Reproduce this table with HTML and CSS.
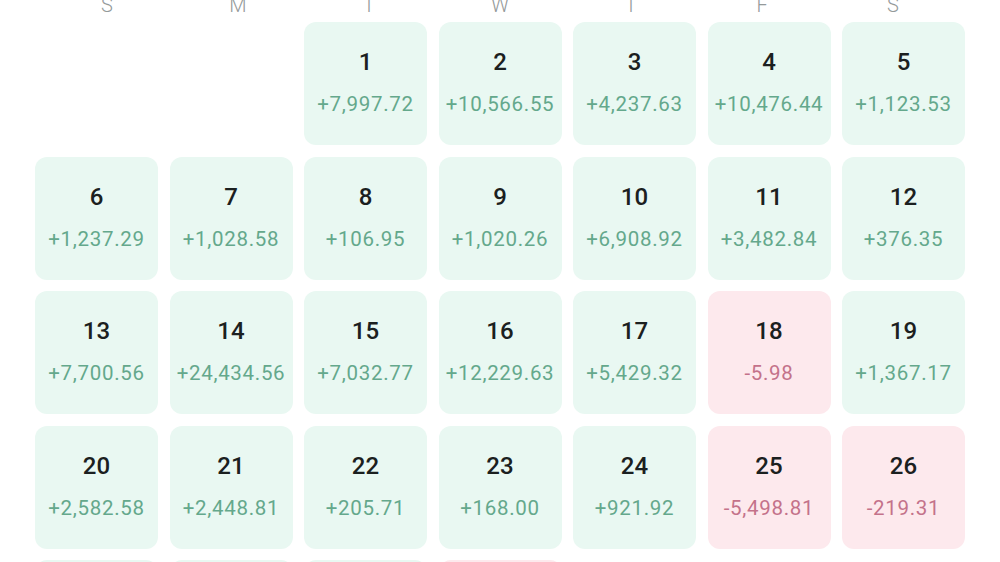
FILE: index.html
```html
<!DOCTYPE html>
<html lang="en">
<head>
<meta charset="utf-8">
<title>Calendar P&amp;L</title>
<link rel="stylesheet" href="styles.css">
</head>
<body>
<div class="page">
  <div class="weekdays">
    <span>S</span><span>M</span><span>T</span><span>W</span><span>T</span><span>F</span><span>S</span>
  </div>
  <div class="grid">
    <div class="empty"></div>
    <div class="empty"></div>
    <div class="day up"><div class="num">1</div><div class="val">+7,997.72</div></div>
    <div class="day up"><div class="num">2</div><div class="val">+10,566.55</div></div>
    <div class="day up"><div class="num">3</div><div class="val">+4,237.63</div></div>
    <div class="day up"><div class="num">4</div><div class="val">+10,476.44</div></div>
    <div class="day up"><div class="num">5</div><div class="val">+1,123.53</div></div>

    <div class="day up"><div class="num">6</div><div class="val">+1,237.29</div></div>
    <div class="day up"><div class="num">7</div><div class="val">+1,028.58</div></div>
    <div class="day up"><div class="num">8</div><div class="val">+106.95</div></div>
    <div class="day up"><div class="num">9</div><div class="val">+1,020.26</div></div>
    <div class="day up"><div class="num">10</div><div class="val">+6,908.92</div></div>
    <div class="day up"><div class="num">11</div><div class="val">+3,482.84</div></div>
    <div class="day up"><div class="num">12</div><div class="val">+376.35</div></div>

    <div class="day up"><div class="num">13</div><div class="val">+7,700.56</div></div>
    <div class="day up"><div class="num">14</div><div class="val">+24,434.56</div></div>
    <div class="day up"><div class="num">15</div><div class="val">+7,032.77</div></div>
    <div class="day up"><div class="num">16</div><div class="val">+12,229.63</div></div>
    <div class="day up"><div class="num">17</div><div class="val">+5,429.32</div></div>
    <div class="day down"><div class="num">18</div><div class="val">-5.98</div></div>
    <div class="day up"><div class="num">19</div><div class="val">+1,367.17</div></div>

    <div class="day up"><div class="num">20</div><div class="val">+2,582.58</div></div>
    <div class="day up"><div class="num">21</div><div class="val">+2,448.81</div></div>
    <div class="day up"><div class="num">22</div><div class="val">+205.71</div></div>
    <div class="day up"><div class="num">23</div><div class="val">+168.00</div></div>
    <div class="day up"><div class="num">24</div><div class="val">+921.92</div></div>
    <div class="day down"><div class="num">25</div><div class="val">-5,498.81</div></div>
    <div class="day down"><div class="num">26</div><div class="val">-219.31</div></div>

    <div class="day up"><div class="num">27</div></div>
    <div class="day up"><div class="num">28</div></div>
    <div class="day up"><div class="num">29</div></div>
    <div class="day down"><div class="num">30</div></div>
  </div>
</div>
</body>
</html>
```

FILE: styles.css
```css
html, body {
  margin: 0;
  padding: 0;
  background: #ffffff;
}
body {
  width: 1000px;
  height: 562px;
  overflow: hidden;
  font-family: Roboto, "Noto Sans", "Liberation Sans", sans-serif;
}
.page {
  display: flex;
  flex-direction: column;
}
.weekdays {
  display: grid;
  grid-template-columns: repeat(7, 131px);
  padding: 0 41.5px;
  margin-top: -5px;
  height: 20px;
  font-size: 20px;
  line-height: 20px;
  font-weight: 300;
  color: #949a9a;
  text-align: center;
}
.grid {
  display: grid;
  grid-template-columns: repeat(7, 123px);
  grid-auto-rows: 123px;
  gap: 11.5px;
  padding: 7px 35px 0;
}
.day {
  border-radius: 12px;
  display: flex;
  flex-direction: column;
  align-items: center;
  padding-top: 26px;
  box-sizing: border-box;
}
.up {
  background: #e9f8f2;
}
.down {
  background: #fde9ed;
}
.num {
  font-size: 24px;
  line-height: 28px;
  font-weight: 500;
  color: #1b2020;
}
.val {
  margin-top: 14px;
  font-size: 20.5px;
  line-height: 28px;
  letter-spacing: 0.7px;
  white-space: nowrap;
}
.up .val {
  color: #64a88c;
}
.down .val {
  color: #c4728a;
}
```
